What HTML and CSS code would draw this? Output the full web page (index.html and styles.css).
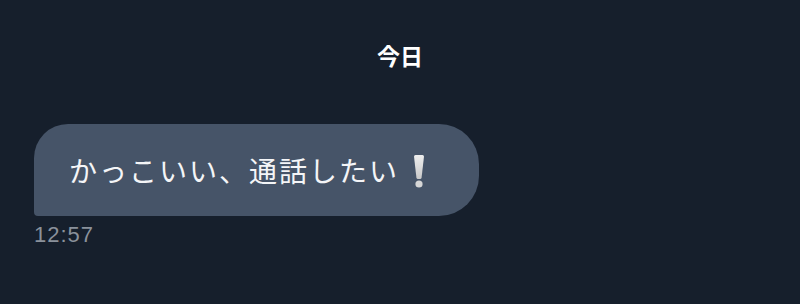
FILE: index.html
```html
<!DOCTYPE html>
<html lang="ja">
<head>
    <meta charset="UTF-8">
    <meta name="viewport" content="width=device-width, initial-scale=1.0">
    <title>今日</title>
    <link rel="stylesheet" href="styles.css">
</head>
<body>
    <div class="chat">
        <div class="day-label">今日</div>

        <div class="message">
            <div class="bubble">
                <span class="bubble-text">かっこいい、通話したい</span>
                <svg class="bang" width="12" height="33" viewBox="0 0 12 33">
                    <defs>
                        <linearGradient id="bangFill" x1="0" y1="0" x2="0" y2="1">
                            <stop offset="0" stop-color="#eeeeee"/>
                            <stop offset="1" stop-color="#c9c9c9"/>
                        </linearGradient>
                    </defs>
                    <path d="M1 1.5 Q1 0 2.5 0 H9.5 Q11 0 11 1.5 L8.6 22.5 Q8.4 24 7 24 H5 Q3.6 24 3.4 22.5 Z" fill="url(#bangFill)"/>
                    <circle cx="6" cy="29" r="3.6" fill="#d6d6d6"/>
                </svg>
            </div>
            <div class="time">12:57</div>
        </div>
    </div>
</body>
</html>
```

FILE: styles.css
```css
/* Chat screen */
body {
    margin: 0;
    background-color: #161f2c;
    font-family: "Noto Sans CJK JP", "Noto Sans", sans-serif;
    color: #fff;
}

.chat {
    padding: 39px 0 0 34px;
    height: 304px;
    box-sizing: border-box;
}

.day-label {
    text-align: center;
    font-size: 23px;
    font-weight: 700;
    line-height: 32px;
    margin-left: -34px;
    margin-bottom: 53px;
}

.message {
    display: flex;
    flex-direction: column;
    align-items: flex-start;
}

.bubble {
    display: flex;
    align-items: center;
    gap: 14px;
    height: 92px;
    box-sizing: border-box;
    padding: 0 54px 0 35px;
    background-color: #465468;
    border-radius: 34px 40px 40px 4px;
}

.bubble-text {
    font-size: 28px;
    letter-spacing: 2px;
    line-height: 1;
    color: #f4f5f7;
}

.bang {
    display: block;
    margin-top: 2px;
}

.time {
    margin-top: 6px;
    font-family: "Liberation Sans", Arial, sans-serif;
    font-size: 22px;
    letter-spacing: 1px;
    line-height: 26px;
    color: #8a919b;
}
```
